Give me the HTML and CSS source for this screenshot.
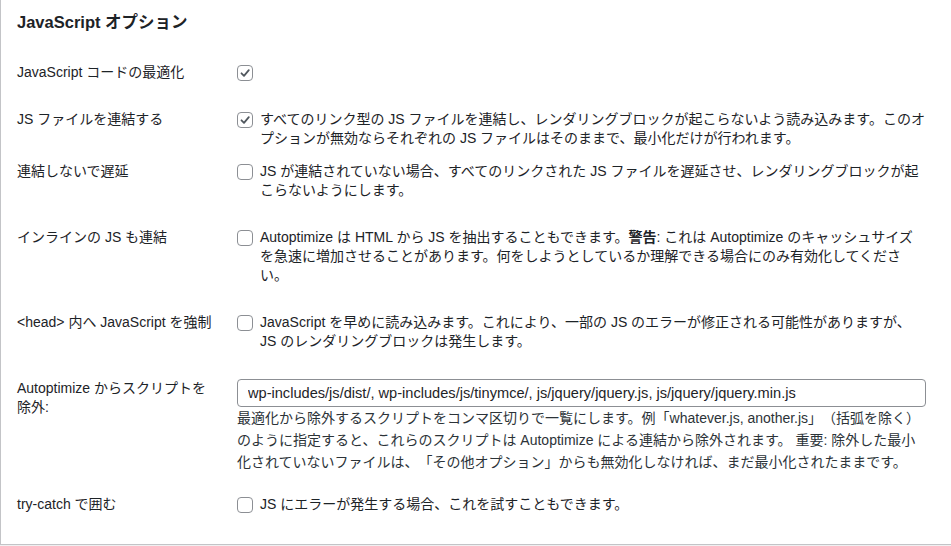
FILE: index.html
```html
<!DOCTYPE html>
<html>
<head lang="ja">
    <meta charset="UTF-8">
    <title>JavaScript オプション</title>
    <link rel="stylesheet" href="styles.css">
</head>
<body>
<div class="panel">
    <h2 class="title">JavaScript オプション</h2>

    <div class="row">
        <div class="label">JavaScript コードの最適化</div>
        <div class="field">
            <span class="box"><svg viewBox="0 0 14 14"><path d="M3.5 7.3 L6 9.8 L10.8 4.2"/></svg></span>
        </div>
    </div>

    <div class="row row-tight-bottom">
        <div class="label">JS ファイルを連結する</div>
        <div class="field">
            <span class="box"><svg viewBox="0 0 14 14"><path d="M3.5 7.3 L6 9.8 L10.8 4.2"/></svg></span>
            <span class="text">すべてのリンク型の JS ファイルを連結し、レンダリングブロックが起こらないよう読み込みます。このオ<br>プションが無効ならそれぞれの JS ファイルはそのままで、最小化だけが行われます。</span>
        </div>
    </div>

    <div class="row row-tight-top">
        <div class="label">連結しないで遅延</div>
        <div class="field">
            <span class="box"></span>
            <span class="text">JS が連結されていない場合、すべてのリンクされた JS ファイルを遅延させ、レンダリングブロックが起<br>こらないようにします。</span>
        </div>
    </div>

    <div class="row">
        <div class="label">インラインの JS も連結</div>
        <div class="field">
            <span class="box"></span>
            <span class="text">Autoptimize は HTML から JS を抽出することもできます。<strong>警告</strong>: これは Autoptimize のキャッシュサイズ<br>を急速に増加させることがあります。何をしようとしているか理解できる場合にのみ有効化してくださ<br>い。</span>
        </div>
    </div>

    <div class="row">
        <div class="label">&lt;head&gt; 内へ JavaScript を強制</div>
        <div class="field">
            <span class="box"></span>
            <span class="text">JavaScript を早めに読み込みます。これにより、一部の JS のエラーが修正される可能性がありますが、<br>JS のレンダリングブロックは発生します。</span>
        </div>
    </div>

    <div class="row row-input">
        <div class="label">Autoptimize からスクリプトを<br>除外:</div>
        <div class="field field-col">
            <input class="input" type="text" value="wp-includes/js/dist/, wp-includes/js/tinymce/, js/jquery/jquery.js, js/jquery/jquery.min.js">
            <p class="desc">最適化から除外するスクリプトをコンマ区切りで一覧にします。例「whatever.js, another.js」（括弧を除く）<br>のように指定すると、これらのスクリプトは Autoptimize による連結から除外されます。 重要: 除外した最小<br>化されていないファイルは、「その他オプション」からも無効化しなければ、まだ最小化されたままです。</p>
        </div>
    </div>

    <div class="row row-last">
        <div class="label">try-catch で囲む</div>
        <div class="field">
            <span class="box"></span>
            <span class="text">JS にエラーが発生する場合、これを試すこともできます。</span>
        </div>
    </div>
</div>
</body>
</html>
```

FILE: styles.css
```css
*{
    margin: 0;
    padding: 0;
    box-sizing: border-box;
}
html,body{
    width: 100%;
    height: 100%;
}
body{
    background: #f0f0f1;
    font-family: "Liberation Sans", "Noto Sans CJK JP", sans-serif;
    font-size: 14px;
    color: #1d2327;
    text-spacing-trim: space-all;
}
.panel{
    background: #fff;
    border-left: 1px solid #c3c4c7;
    border-bottom: 1px solid #c3c4c7;
    padding: 11px 14px 0 16px;
    height: 545px;
    overflow: hidden;
}
.title{
    font-size: 16.5px;
    line-height: 22px;
    font-weight: 700;
    margin-bottom: 16px;
}
.row{
    display: flex;
    padding: 14px 0;
    line-height: 19px;
}
.row-tight-bottom{
    padding-bottom: 7px;
}
.row-tight-top{
    padding-top: 7px;
}
.row-input{
    padding-bottom: 8px;
}
.row-last{
    padding-bottom: 30px;
}
.label{
    flex: 0 0 210px;
    padding-right: 10px;
    white-space: nowrap;
}
.field{
    flex: 1;
    display: flex;
    align-items: flex-start;
    padding: 0 10px;
    min-width: 0;
}
.field-col{
    flex-direction: column;
}
.box{
    flex: 0 0 16px;
    width: 16px;
    height: 16px;
    margin-top: 2px;
    margin-right: 7px;
    border: 1px solid #8c8f94;
    border-radius: 4px;
    background: #fff;
}
.box svg{
    display: block;
    width: 14px;
    height: 14px;
}
.box path{
    fill: none;
    stroke: #50575e;
    stroke-width: 1.8;
    stroke-linecap: round;
    stroke-linejoin: round;
}
.text{
    flex: 1;
    white-space: nowrap;
}
.input{
    width: calc(100% - 1px);
    height: 28px;
    border: 1px solid #8c8f94;
    border-radius: 4px;
    padding: 0 10px;
    font-family: "Liberation Sans", "Noto Sans CJK JP", sans-serif;
    font-size: 14.6px;
    color: #1d2327;
    background: #fff;
}
.desc{
    margin-top: 1px;
    line-height: 21.75px;
    color: #2c3338;
    white-space: nowrap;
}
```
